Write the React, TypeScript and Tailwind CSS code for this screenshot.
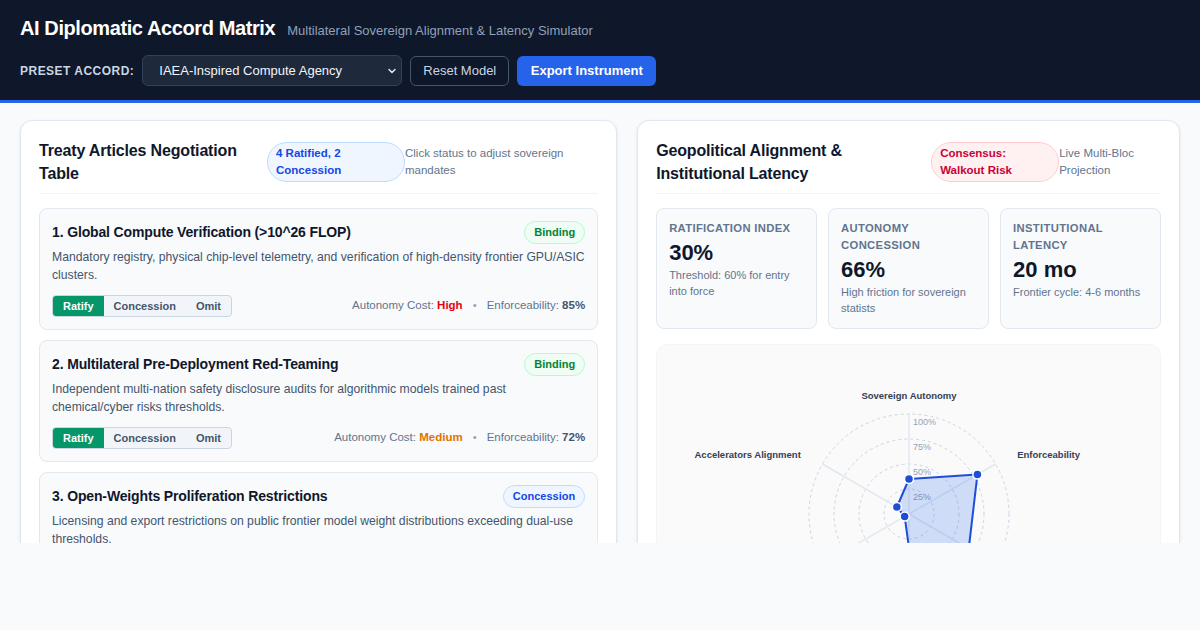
import { ChevronDown } from "lucide-react";

type Status = "Ratify" | "Concession" | "Omit";

const articles = [
  {
    title: "1. Global Compute Verification (>10^26 FLOP)",
    desc: "Mandatory registry, physical chip-level telemetry, and verification of high-density frontier GPU/ASIC clusters.",
    badge: "Binding",
    cost: "High",
    enforce: "85%",
    status: "Ratify" as Status,
  },
  {
    title: "2. Multilateral Pre-Deployment Red-Teaming",
    desc: "Independent multi-nation safety disclosure audits for algorithmic models trained past chemical/cyber risks thresholds.",
    badge: "Binding",
    cost: "Medium",
    enforce: "72%",
    status: "Ratify" as Status,
  },
  {
    title: "3. Open-Weights Proliferation Restrictions",
    desc: "Licensing and export restrictions on public frontier model weight distributions exceeding dual-use thresholds.",
    badge: "Concession",
    cost: "High",
    enforce: "48%",
    status: "Concession" as Status,
  },
  {
    title: "4. Sovereign Incident Reporting Channel",
    desc: "Shared 72-hour disclosure channel for critical capability incidents across signatory states.",
    badge: "Binding",
    cost: "Low",
    enforce: "66%",
    status: "Ratify" as Status,
  },
];

const stats = [
  { label: "Ratification Index", value: "30%", note: "Threshold: 60% for entry into force" },
  { label: "Autonomy Concession", value: "66%", note: "High friction for sovereign statists" },
  { label: "Institutional Latency", value: "20 mo", note: "Frontier cycle: 4-6 months" },
];

// clockwise from the top
const axes = [
  { label: "Sovereign Autonomy", value: 35 },
  { label: "Enforceability", value: 79 },
  { label: "Verification Depth", value: 69 },
  { label: "Institutional Speed", value: 34 },
  { label: "Global South Inclusion", value: 5 },
  { label: "Accelerators Alignment", value: 14 },
];

const costColor: Record<string, string> = {
  High: "text-red-600",
  Medium: "text-amber-600",
  Low: "text-emerald-600",
};

function Radar() {
  const cx = 252;
  const cy = 169;
  const pt = (i: number, r: number) => {
    const a = (-90 + i * 60) * (Math.PI / 180);
    return [cx + r * Math.cos(a), cy + r * Math.sin(a)];
  };
  const poly = axes.map((a, i) => pt(i, a.value).join(",")).join(" ");

  return (
    <svg width="502" height="360" viewBox="0 0 502 360" className="block">
      {[25, 50, 75, 100].map((r) => (
        <circle key={r} cx={cx} cy={cy} r={r} fill="none" stroke="#cbd5e1" strokeDasharray="3 3" strokeWidth="1" />
      ))}
      {axes.map((_, i) => {
        const [x, y] = pt(i, 100);
        return <line key={i} x1={cx} y1={cy} x2={x} y2={y} stroke="#e2e8f0" strokeWidth="1.5" />;
      })}
      {[100, 75, 50, 25].map((r) => (
        <text key={r} x={cx + 4} y={cy - r + 11} fontSize="9" fill="#94a3b8">
          {r}%
        </text>
      ))}
      <polygon points={poly} fill="rgba(37,99,235,0.2)" stroke="#1d4ed8" strokeWidth="2" strokeLinejoin="round" />
      {axes.map((a, i) => {
        const [x, y] = pt(i, a.value);
        return <circle key={i} cx={x} cy={y} r="4.5" fill="#1d4ed8" stroke="#fff" strokeWidth="1.5" />;
      })}
      {axes.map((a, i) => {
        const [x, y] = pt(i, 118);
        const anchor = Math.abs(x - cx) < 1 ? "middle" : x > cx ? "start" : "end";
        const dx = anchor === "start" ? 6 : anchor === "end" ? -6 : 0;
        return (
          <text key={i} x={x + dx} y={y + 3} textAnchor={anchor} fontSize="9.5" fontWeight="700" fill="#334155">
            {a.label}
          </text>
        );
      })}
    </svg>
  );
}

export default function App() {
  return (
    <div className="min-h-screen w-[1200px] bg-[#f8fafc]" style={{ fontFamily: '"Liberation Sans", Arial, sans-serif' }}>
      <header className="bg-[#0f172a] px-5 pt-[14px] pb-[14px] border-b-[3px] border-[#2563eb]">
        <div className="flex items-baseline gap-3 h-7">
          <h1 className="text-xl font-bold tracking-[-0.02em] text-white leading-7">AI Diplomatic Accord Matrix</h1>
          <span className="text-[13px] text-slate-400">Multilateral Sovereign Alignment &amp; Latency Simulator</span>
        </div>
        <div className="mt-[13px] flex items-center gap-2 h-[31px]">
          <span className="text-xs font-bold uppercase tracking-[0.04em] text-slate-300">Preset Accord:</span>
          <div className="relative">
            <select className="appearance-none w-[260px] h-[31px] rounded-md border border-slate-700 bg-[#1e293b] pl-4 pr-8 text-[13px] text-slate-100">
              <option>IAEA-Inspired Compute Agency</option>
            </select>
            <ChevronDown size={12} strokeWidth={3} className="absolute right-[4px] top-[10px] text-slate-200 pointer-events-none" />
          </div>
          <button className="h-[30px] rounded-md border border-slate-600 px-3 text-[13px] text-slate-300">Reset Model</button>
          <button className="h-[30px] rounded-md bg-[#2563eb] px-[13.5px] text-[13px] font-bold text-white">Export Instrument</button>
        </div>
      </header>

      <main className="h-[440px] overflow-hidden px-5 pt-[17px] grid grid-cols-[1.1fr_1fr] gap-5 items-start">
        {/* Articles */}
        <section className="rounded-xl border border-slate-200 bg-white p-[18px] shadow-sm">
          <div className="flex items-center border-b border-slate-100 pb-2">
            <h2 className="w-[228px] shrink-0 text-base font-bold leading-[23px] tracking-[-0.01em] text-slate-900">Treaty Articles Negotiation Table</h2>
            <span className="w-[138px] shrink-0 rounded-full border border-blue-200 bg-blue-50 px-2 py-[2px] text-[11.5px] font-bold leading-[17px] text-blue-700">
              4 Ratified, 2 Concession
            </span>
            <span className="flex-1 text-[11.5px] leading-[17px] text-slate-500">Click status to adjust sovereign mandates</span>
          </div>

          <div className="mt-[14px] space-y-2.5">
            {articles.map((a) => (
              <div key={a.title} className="rounded-lg border border-slate-200 bg-[#f8fafc] p-3">
                <div className="flex items-start justify-between gap-3">
                  <h3 className="pt-[1px] text-sm font-bold leading-5 tracking-[-0.01em] text-slate-900">{a.title}</h3>
                  <span
                    className={`shrink-0 rounded-full border px-[9px] py-[3px] text-[11px] font-bold leading-[15px] ${
                      a.badge === "Binding" ? "border-green-200 bg-green-50 text-green-700" : "border-blue-200 bg-blue-50 text-blue-700"
                    }`}
                  >
                    {a.badge}
                  </span>
                </div>
                <p className="mt-1 text-[12.2px] leading-[18px] text-slate-600">{a.desc}</p>
                <div className="mt-[11px] flex items-center justify-between">
                  <div className="flex overflow-hidden rounded border border-slate-300 bg-slate-100">
                    {(["Ratify", "Concession", "Omit"] as Status[]).map((s) => (
                      <button
                        key={s}
                        className={`px-2.5 py-[3px] text-[11px] font-bold leading-[14px] ${
                          s === a.status ? "bg-[#059669] text-white" : "text-slate-600"
                        }`}
                      >
                        {s}
                      </button>
                    ))}
                  </div>
                  <div className="text-[11.5px] text-slate-500">
                    Autonomy Cost: <span className={`font-bold ${costColor[a.cost]}`}>{a.cost}</span>
                    <span className="mx-2.5 text-slate-400">•</span>
                    Enforceability: <span className="font-bold text-slate-600">{a.enforce}</span>
                  </div>
                </div>
              </div>
            ))}
          </div>
        </section>

        {/* Alignment */}
        <section className="rounded-xl border border-slate-200 bg-white p-[18px] shadow-sm">
          <div className="flex items-center border-b border-slate-100 pb-2">
            <h2 className="w-[275px] shrink-0 text-base font-bold leading-[23px] tracking-[-0.01em] text-slate-900">Geopolitical Alignment &amp; Institutional Latency</h2>
            <span className="w-[128px] shrink-0 rounded-full border border-rose-200 bg-rose-50 px-2 py-[2px] text-[11.5px] font-bold leading-[17px] text-rose-700">
              Consensus: Walkout Risk
            </span>
            <span className="flex-1 text-[11.5px] leading-[17px] text-slate-500">Live Multi-Bloc Projection</span>
          </div>

          <div className="mt-[14px] grid grid-cols-3 gap-[11px]">
            {stats.map((s) => (
              <div key={s.label} className="rounded-lg border border-slate-200 bg-[#f8fafc] px-3 pt-[11px] pb-3">
                <div className="text-[11.25px] font-bold uppercase leading-[17px] tracking-[0.03em] text-slate-500">{s.label}</div>
                <div className="mt-0.5 text-[22px] font-bold leading-7 text-slate-900">{s.value}</div>
                <div className="text-[11px] leading-4 text-slate-500">{s.note}</div>
              </div>
            ))}
          </div>

          <div className="mt-[15px] rounded-xl border border-slate-100 bg-[#fafafa]">
            <Radar />
          </div>
        </section>
      </main>
    </div>
  );
}
